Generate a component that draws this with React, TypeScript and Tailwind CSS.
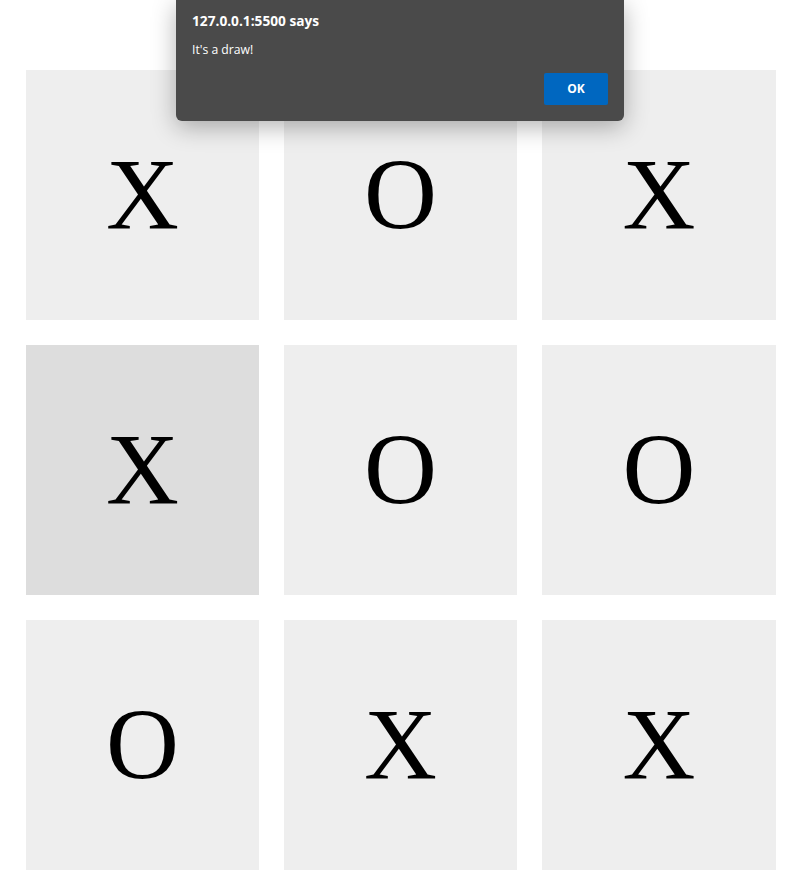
import React from "react";

const cells = ["X", "O", "X", "X", "O", "O", "O", "X", "X"];

export default function App() {
  return (
    <div className="relative w-[812px] h-[894px] bg-white overflow-hidden">
      <div className="pt-[70px] pl-[26px]">
        <div className="grid grid-cols-[233px_233px_234px] gap-x-[25px] gap-y-[25px] w-[750px]">
          {cells.map((c, i) => (
            <div
              key={i}
              className={`h-[250px] flex items-center justify-center ${i === 3 ? "bg-[#dddddd]" : "bg-[#eeeeee]"}`}
            >
              <span
                className="text-[101px] leading-none text-black"
                style={{ fontFamily: '"Liberation Serif", "Times New Roman", serif' }}
              >
                {c}
              </span>
            </div>
          ))}
        </div>
      </div>

      <div
        className="absolute left-[176px] top-0 w-[448px] h-[121px] bg-[#4a4a4a] rounded-b-[6px] shadow-[0_6px_24px_rgba(0,0,0,0.3)] text-white"
        style={{ fontFamily: '"Open Sans", "Noto Sans", sans-serif' }}
      >
        <div className="pl-[16px] pt-[12px] text-[13.7px] font-bold leading-[18px]">127.0.0.1:5500 says</div>
        <div className="pl-[16px] pt-[12px] text-[12.2px] leading-[16px]">It's a draw!</div>
        <div className="absolute left-[368px] top-[73px] w-[64px] h-[32px] bg-[#0067c0] rounded-[2px] flex items-center justify-center text-[12px] font-bold">
          OK
        </div>
      </div>
    </div>
  );
}
